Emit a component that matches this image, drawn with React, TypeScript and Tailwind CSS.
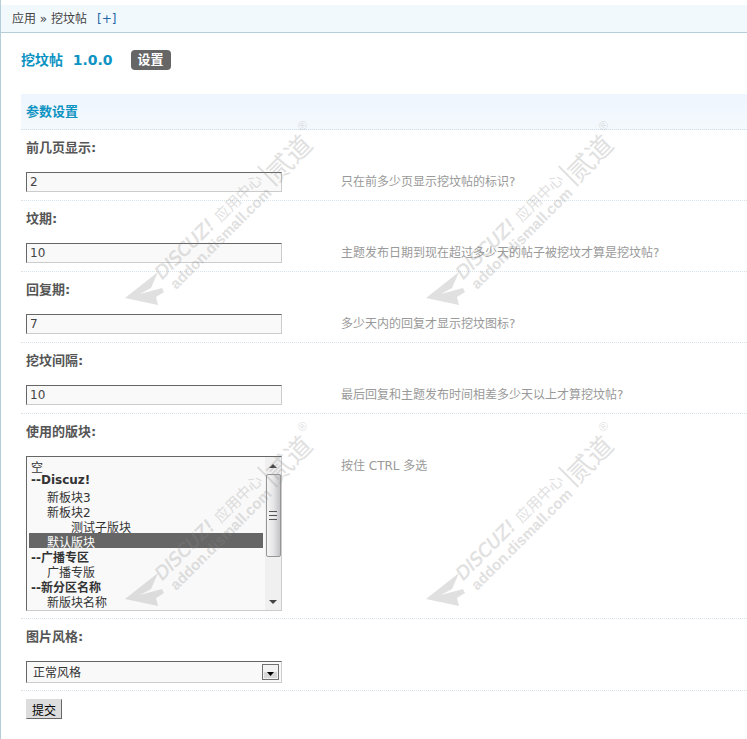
import type { ReactNode } from 'react';

interface Forum {
  id: string;
  name: string;
  sub?: boolean;
}

interface ForumGroup {
  label: string;
  forums: Forum[];
}

const forumGroups: ForumGroup[] = [
  {
    label: '--Discuz!',
    forums: [
      { id: '3', name: '新板块3' },
      { id: '4', name: '新板块2' },
      { id: '5', name: '测试子版块', sub: true },
      { id: '2', name: '默认版块' },
    ],
  },
  { label: '--广播专区', forums: [{ id: '7', name: '广播专版' }] },
  { label: '--新分区名称', forums: [{ id: '9', name: '新版块名称' }] },
];

const numberFields = [
  { id: 'pages', label: '前几页显示:', value: '2', hint: '只在前多少页显示挖坟帖的标识?' },
  { id: 'graveDays', label: '坟期:', value: '10', hint: '主题发布日期到现在超过多少天的帖子被挖坟才算是挖坟帖?' },
  { id: 'replyDays', label: '回复期:', value: '7', hint: '多少天内的回复才显示挖坟图标?' },
  { id: 'interval', label: '挖坟间隔:', value: '10', hint: '最后回复和主题发布时间相差多少天以上才算挖坟帖?' },
];

const fieldBorder =
  'border border-t-[#666] border-r-[#ccc] border-b-[#ccc] border-l-[#666] bg-[#f9f9f9]';

interface SettingRowProps {
  id: string;
  label: string;
  hint?: string;
  children: ReactNode;
}

function SettingRow({ id, label, hint, children }: SettingRowProps) {
  return (
    <div className="border-b border-dotted border-[#d6e3ea] px-[5px] pt-2 pb-[7px]">
      <label htmlFor={id} className="mb-3.5 block text-[13px] leading-5 font-bold text-[#555]">
        {label}
      </label>
      <div className="flex items-start">
        <div className="mr-[59px] w-64 shrink-0">{children}</div>
        {hint && <p className="text-xs leading-5 text-[#999]">{hint}</p>}
      </div>
    </div>
  );
}

function ScrollBar() {
  return (
    <div
      aria-hidden="true"
      className="pointer-events-none absolute inset-y-px right-px flex w-4 flex-col items-center bg-[#f0f0f0]"
    >
      <svg viewBox="0 0 16 17" className="h-[17px] w-4 shrink-0">
        <path d="M4 11 L8 7 L12 11 Z" fill="#444" />
      </svg>
      <div className="flex h-[83px] w-[15px] shrink-0 flex-col items-center justify-center gap-px rounded-xs border border-[#979797] bg-linear-to-r from-[#f5f5f5] via-[#e6e6e8] to-[#c4c4c8]">
        <span className="h-px w-2 bg-[#555]" />
        <span className="h-px w-2 bg-[#eee]" />
        <span className="h-px w-2 bg-[#555]" />
        <span className="h-px w-2 bg-[#eee]" />
        <span className="h-px w-2 bg-[#555]" />
      </div>
      <svg viewBox="0 0 16 17" className="mt-auto h-[17px] w-4 shrink-0">
        <path d="M4 7 L12 7 L8 11 Z" fill="#444" />
      </svg>
    </div>
  );
}

function Watermark({ className }: { className: string }) {
  return (
    <svg
      viewBox="0 0 200 190"
      className={`absolute h-[190px] w-[200px] overflow-visible ${className}`}
    >
      <g fill="#888" opacity="0.25">
        <path d="M5 178 L38 152 L31 168 L20 174 L42 168 L44 172 L36 177 L38 185 Z" />
        <g transform="translate(45 160) rotate(-45)">
          <text
            x="-2"
            y="-2"
            fontSize="18"
            fontStyle="italic"
            stroke="#888"
            strokeWidth="0.5"
            fontFamily="'DejaVu Sans', sans-serif"
          >
            DISCUZ!
          </text>
          <text x="80" y="-1" fontSize="15" fontFamily="'Noto Sans CJK SC', sans-serif">
            应用中心
          </text>
          <text
            x="1"
            y="15"
            fontSize="15"
            fontWeight="bold"
            fontFamily="'Liberation Sans', sans-serif"
          >
            addon.dismall.com
          </text>
          <rect x="145" y="-15" width="2" height="28" />
          <text x="148" y="11" fontSize="26" fontFamily="'Noto Sans CJK SC', sans-serif">
            贰道
          </text>
          <text x="202" y="-8" fontSize="12" fontFamily="'Liberation Sans', sans-serif">
            ®
          </text>
        </g>
      </g>
    </svg>
  );
}

export default function App() {
  return (
    <div className="relative min-h-screen overflow-hidden border-l border-[#b5cfd9] bg-white pt-[5px] font-['DejaVu_Sans','Noto_Sans_CJK_SC',sans-serif] text-xs text-[#444]">
      <nav className="flex h-7 items-center border-b border-[#b5cfd9] bg-[#f2f9fd] px-[11px] leading-5">
        <span>应用&nbsp;»&nbsp;挖坟帖</span>
        <a href="#add" className="ml-2.5 text-[#2366a8]">
          [+]
        </a>
      </nav>

      <main className="pl-5">
        <header className="flex h-[61px] items-start pt-[17px]">
          <h1 className="text-sm leading-5 font-bold text-[#0e93c2]">挖坟帖&nbsp; 1.0.0</h1>
          <a
            href="#settings"
            className="ml-[18px] rounded-sm bg-[#666] px-[7px] text-[13px] leading-5 font-bold text-white"
          >
            设置
          </a>
        </header>

        <form onSubmit={(e) => e.preventDefault()}>
          <h2 className="border-b border-dotted border-[#cfe0ea] bg-linear-to-b from-[#eef5fe] to-[#f4f9fd] px-[5px] text-[13px] leading-[35px] font-bold text-[#0e93c2]">
            参数设置
          </h2>

          {numberFields.map((field) => (
            <SettingRow key={field.id} id={field.id} label={field.label} hint={field.hint}>
              <input
                id={field.id}
                type="text"
                defaultValue={field.value}
                className={`mb-px block h-5 w-full px-[3px] text-xs outline-none ${fieldBorder}`}
              />
            </SettingRow>
          ))}

          <SettingRow id="forums" label="使用的版块:" hint="按住 CTRL 多选">
            <div className="relative">
              <select
                id="forums"
                multiple
                size={10}
                defaultValue={['2']}
                className={`block h-[155px] w-full overflow-y-scroll pt-px pr-[18px] pl-0.5 text-xs text-[#333] outline-none [scrollbar-width:none] ${fieldBorder}`}
              >
                <option value="" className="h-[15px] min-h-0 p-0 pl-0.5">
                  空
                </option>
                {forumGroups.map((group) => (
                  <optgroup
                    key={group.label}
                    label={group.label}
                    className="p-0 font-bold [&:not(:first-of-type)>option:first-child]:-mt-[3px]"
                  >
                    {group.forums.map((forum) => (
                      <option
                        key={forum.id}
                        value={forum.id}
                        className={`h-[15px] min-h-0 p-0 font-normal before:content-none checked:bg-linear-to-b checked:from-[#666] checked:to-[#666] checked:[-webkit-text-fill-color:#fff] ${
                          forum.sub ? 'pl-[42px]' : 'pl-[18px]'
                        }`}
                      >
                        {forum.name}
                      </option>
                    ))}
                  </optgroup>
                ))}
              </select>
              <ScrollBar />
            </div>
          </SettingRow>

          <SettingRow id="style" label="图片风格:">
            <div className="relative">
              <select
                id="style"
                className={`block h-[22px] w-full appearance-none pt-0.5 pr-6 pl-1.5 text-xs text-[#333] outline-none ${fieldBorder}`}
              >
                <option>正常风格</option>
              </select>
              <svg
                aria-hidden="true"
                viewBox="0 0 17 16"
                className="pointer-events-none absolute top-[3px] right-[3px] h-4 w-[17px]"
              >
                <rect x="0.5" y="0.5" width="16" height="15" fill="#f3f3f3" stroke="#707070" />
                <rect x="2" y="8" width="13" height="6" fill="#d8d8d8" />
                <path d="M5 8 L12 8 L8.5 12 Z" fill="#000" />
              </svg>
            </div>
          </SettingRow>

          <div className="px-[5px] pt-2">
            <button
              type="submit"
              className="block h-5 border border-t-[#ddd] border-r-[#666] border-b-[#666] border-l-[#ddd] bg-[#ddd] px-[5px] pt-px text-xs leading-5 text-black"
            >
              提交
            </button>
          </div>
        </form>
      </main>

      <div aria-hidden="true" className="pointer-events-none absolute inset-0 overflow-hidden">
        <Watermark className="top-[120px] left-[119px]" />
        <Watermark className="top-[120px] left-[420px]" />
        <Watermark className="top-[421px] left-[119px]" />
        <Watermark className="top-[421px] left-[420px]" />
      </div>
    </div>
  );
}
